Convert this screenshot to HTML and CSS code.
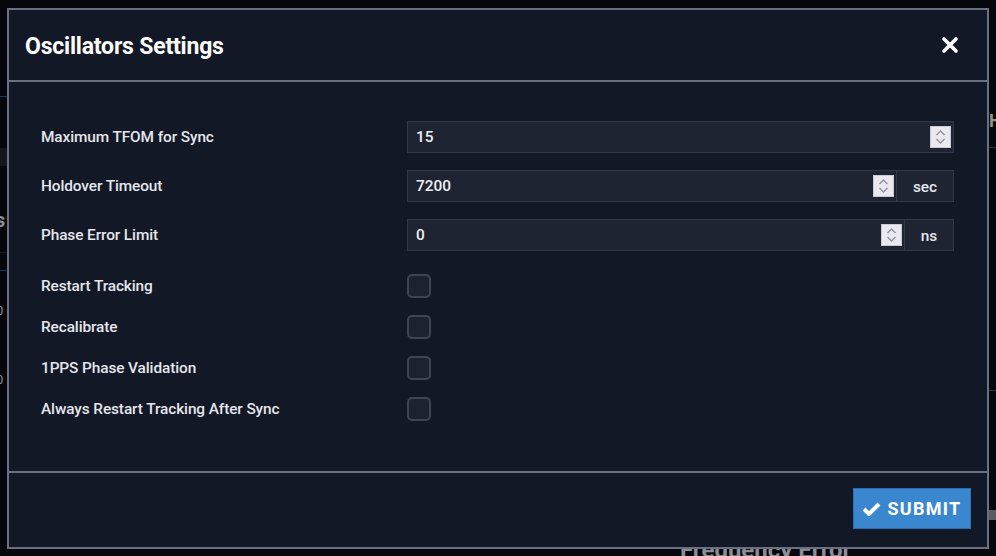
FILE: index.html
```html
<!DOCTYPE html>
<html>
<head>
<meta charset="utf-8">
<link rel="stylesheet" href="styles.css">
</head>
<body>
<div class="backdrop">
  <div class="bg-line bl1"></div>
  <div class="bg-band bb1"></div>
  <div class="bg-line bl2"></div>
  <div class="bg-line bl3"></div>
  <div class="bg-text bt-s">s</div>
  <div class="bg-text bt-0a">0</div>
  <div class="bg-text bt-0b">0</div>
  <div class="bg-text bt-h">H</div>
  <div class="bg-line br1"></div>
  <div class="bg-line br2"></div>
  <div class="bg-band br3"></div>
  <div class="bg-text bt-freq">Frequency Error</div>
</div>

<div class="modal">
  <div class="modal-header">
    <h1 class="modal-title">Oscillators Settings</h1>
    <button class="close-btn" aria-label="Close">
      <svg width="18" height="18" viewBox="0 0 18 18"><path d="M3 3 L15 15 M15 3 L3 15" stroke="#fff" stroke-width="3.6" stroke-linecap="round"/></svg>
    </button>
  </div>
  <div class="modal-body">
    <div class="form-row">
      <label class="form-label">Maximum TFOM for Sync</label>
      <div class="input-group">
        <div class="num-input"><span class="val">15</span><span class="spinner"><svg width="11" height="16" viewBox="0 0 11 16"><path d="M1.5 6 L5.5 2 L9.5 6 M1.5 10 L5.5 14 L9.5 10" fill="none" stroke="#8f93a3" stroke-width="1.4"/></svg></span></div>
      </div>
    </div>
    <div class="form-row">
      <label class="form-label">Holdover Timeout</label>
      <div class="input-group">
        <div class="num-input"><span class="val">7200</span><span class="spinner"><svg width="11" height="16" viewBox="0 0 11 16"><path d="M1.5 6 L5.5 2 L9.5 6 M1.5 10 L5.5 14 L9.5 10" fill="none" stroke="#8f93a3" stroke-width="1.4"/></svg></span></div>
        <div class="addon addon-sec">sec</div>
      </div>
    </div>
    <div class="form-row">
      <label class="form-label">Phase Error Limit</label>
      <div class="input-group">
        <div class="num-input"><span class="val">0</span><span class="spinner"><svg width="11" height="16" viewBox="0 0 11 16"><path d="M1.5 6 L5.5 2 L9.5 6 M1.5 10 L5.5 14 L9.5 10" fill="none" stroke="#8f93a3" stroke-width="1.4"/></svg></span></div>
        <div class="addon addon-ns">ns</div>
      </div>
    </div>
    <div class="checks">
      <div class="check-row"><label class="form-label">Restart Tracking</label><span class="checkbox"></span></div>
      <div class="check-row"><label class="form-label">Recalibrate</label><span class="checkbox"></span></div>
      <div class="check-row"><label class="form-label">1PPS Phase Validation</label><span class="checkbox"></span></div>
      <div class="check-row"><label class="form-label">Always Restart Tracking After Sync</label><span class="checkbox"></span></div>
    </div>
  </div>
  <div class="modal-footer">
    <button class="submit-btn">
      <svg width="19" height="15" viewBox="0 0 19 15"><path d="M2 8 L7 13 L17 3" fill="none" stroke="#fff" stroke-width="4" stroke-linejoin="miter"/></svg>
      <span>SUBMIT</span>
    </button>
  </div>
</div>
</body>
</html>
```

FILE: styles.css
```css
html, body {
  margin: 0;
  padding: 0;
}
body {
  width: 996px;
  height: 556px;
  background: #05070c;
  font-family: Roboto, "Liberation Sans", sans-serif;
  position: relative;
  overflow: hidden;
}

.backdrop {
  position: absolute;
  inset: 0;
}
.bg-line {
  position: absolute;
  height: 1px;
  background: #1c3656;
}
.bl1 { left: 0; top: 96px; width: 8px; }
.bl2 { left: 0; top: 252px; width: 8px; background: #1a1d24; }
.bl3 { left: 0; top: 270px; width: 8px; }
.bg-band {
  position: absolute;
  background: #15161a;
}
.bb1 { left: 0; top: 148px; width: 8px; height: 18px; }
.br1 { left: 989px; top: 147px; width: 7px; }
.br2 { left: 989px; top: 390px; width: 7px; background: #3a3a22; }
.br3 { left: 989px; top: 510px; width: 7px; height: 10px; background: #5a5c62; }
.bg-text {
  position: absolute;
  color: #8a8d96;
  font-weight: 700;
  font-size: 20px;
  line-height: 1;
}
.bt-s { left: -5px; top: 210px; }
.bt-0a { left: -4px; top: 304px; font-size: 13px; font-weight: 400; }
.bt-0b { left: -4px; top: 373px; font-size: 13px; font-weight: 400; }
.bt-h { left: 989px; top: 112px; font-size: 18px; color: #9a8f80; }
.bt-freq { left: 680px; top: 538px; font-size: 24px; color: #8b8e96; }

.modal {
  position: absolute;
  left: 7px;
  top: 8px;
  width: 978px;
  height: 537px;
  background: #131826;
  border: 2px solid #6a7080;
  display: flex;
  flex-direction: column;
}

.modal-header {
  height: 72px;
  border-bottom: 2px solid #6a7080;
  display: flex;
  align-items: center;
  justify-content: space-between;
  padding: 0 28px 0 16px;
  box-sizing: border-box;
  flex: none;
}
.modal-title {
  margin: 0;
  font-size: 23px;
  font-weight: 700;
  color: #ffffff;
  letter-spacing: -0.2px;
  padding-top: 2px;
}
.close-btn {
  background: none;
  border: 0;
  padding: 0;
  width: 18px;
  height: 18px;
  display: flex;
  margin-top: 0;
}

.modal-body {
  flex: 1;
  padding: 39px 33px 0 32px;
  box-sizing: border-box;
}
.form-row {
  display: grid;
  grid-template-columns: 366px 1fr;
  align-items: center;
  height: 32px;
  margin-bottom: 17px;
}
.form-label {
  color: #e4e6ec;
  font-size: 15.4px;
  font-weight: 500;
  letter-spacing: -0.1px;
}
.input-group {
  display: flex;
  height: 32px;
  border: 1px solid #323848;
  background: #1f2433;
  box-sizing: border-box;
}
.num-input {
  flex: 1;
  display: flex;
  align-items: center;
  justify-content: space-between;
  padding: 0 2px 0 8px;
}
.val {
  color: #eef0f4;
  font-size: 15.4px;
  font-weight: 500;
}
.spinner {
  width: 21px;
  height: 22px;
  background: #e9e9ef;
  border: 1px solid #c9cad2;
  box-sizing: border-box;
  display: flex;
  align-items: center;
  justify-content: center;
}
.addon {
  border-left: 1px solid #323848;
  color: #e4e6ec;
  font-size: 15.4px;
  font-weight: 500;
  display: flex;
  align-items: center;
  justify-content: center;
  padding-top: 2px;
  box-sizing: border-box;
}
.addon-sec { width: 57px; }
.addon-ns { width: 49px; }

.checks {
  padding-top: 6px;
}
.check-row {
  display: grid;
  grid-template-columns: 366px 1fr;
  align-items: center;
  height: 24px;
  margin-bottom: 17px;
}
.checkbox {
  width: 24px;
  height: 24px;
  box-sizing: border-box;
  border: 2px solid #3e4454;
  border-radius: 5px;
  background: #1d2231;
}

.modal-footer {
  height: 76px;
  border-top: 2px solid #6a7080;
  display: flex;
  align-items: center;
  justify-content: flex-end;
  padding: 0 16px 0 0;
  box-sizing: border-box;
  flex: none;
}
.submit-btn {
  width: 118px;
  height: 41px;
  background: #3a87d0;
  border: 1px solid #2c6eaf;
  color: #fff;
  font-family: Roboto, "Liberation Sans", sans-serif;
  font-weight: 700;
  font-size: 18px;
  letter-spacing: 1.3px;
  display: flex;
  align-items: center;
  justify-content: center;
  gap: 6px;
  padding: 0;
  margin-top: -4px;
}
```
